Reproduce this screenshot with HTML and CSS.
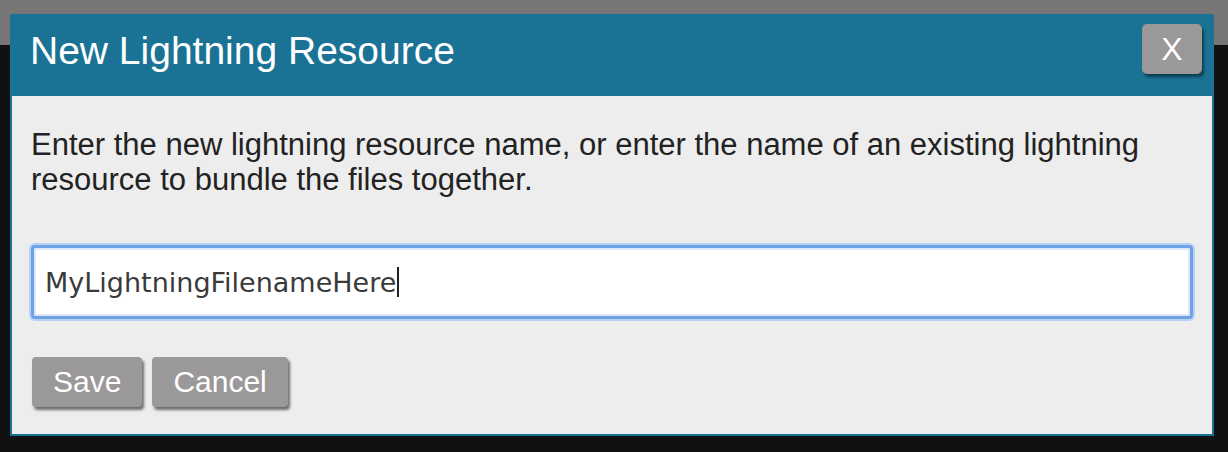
FILE: index.html
```html
<!DOCTYPE html>
<html lang="en">
<head>
<meta charset="utf-8">
<title>New Lightning Resource</title>
<link rel="stylesheet" href="styles.css">
</head>
<body>
<div class="page">
  <div class="dialog">
    <div class="header">
      <h1 class="title">New Lightning Resource</h1>
      <button class="close" type="button">X</button>
    </div>
    <div class="content">
      <p class="message">Enter the new lightning resource name, or enter the name of an existing lightning resource to bundle the files together.</p>
      <div class="field"><span class="value">MyLightningFilenameHere</span><span class="caret"></span></div>
      <div class="actions">
        <button class="btn" type="button">Save</button>
        <button class="btn" type="button">Cancel</button>
      </div>
    </div>
  </div>
</div>
</body>
</html>
```

FILE: styles.css
```css
html, body {
  margin: 0;
  padding: 0;
}
body {
  width: 1228px;
  height: 452px;
  overflow: hidden;
  background: linear-gradient(#787576 0, #787576 45px, #101112 45px, #101112 100%);
  font-family: "Liberation Sans", Arial, sans-serif;
}
.page {
  padding: 14px 0 0 10px;
}
.dialog {
  width: 1200px;
  border: 2px solid #1a7394;
  border-top-width: 0;
  background: #ededed;
}
.header {
  display: flex;
  justify-content: space-between;
  align-items: flex-start;
  height: 72px;
  padding: 10px 10px 0 18px;
  background: #1a7394;
}
.title {
  margin: 5px 0 0 0;
  font-size: 39px;
  font-weight: normal;
  line-height: 44px;
  color: #ffffff;
}
.close {
  width: 60px;
  height: 50px;
  padding: 0;
  border: none;
  border-radius: 5px;
  background: #9b9899;
  color: #ffffff;
  font-family: "Liberation Sans", Arial, sans-serif;
  font-size: 32px;
  line-height: 50px;
  box-shadow: 2px 3px 3px rgba(0, 20, 30, 0.55);
}
.content {
  padding: 31px 19px 27px 19px;
}
.message {
  margin: 0 0 48px 0;
  font-size: 31px;
  line-height: 35px;
  color: #222222;
}
.field {
  box-sizing: border-box;
  display: flex;
  align-items: center;
  height: 74px;
  padding: 0 0 0 11px;
  border: 3px solid #6ea2e4;
  border-radius: 4px;
  background: #ffffff;
  box-shadow: 0 0 0 2px rgba(160, 200, 245, 0.75), inset 0 0 0 2px #dce9fa;
  font-family: "DejaVu Sans", Verdana, sans-serif;
  font-size: 27px;
  color: #3a3a3a;
}
.caret {
  display: inline-block;
  width: 2px;
  height: 30px;
  margin-left: 1px;
  background: #222222;
}
.actions {
  display: flex;
  gap: 10px;
  margin-top: 38px;
  padding-left: 1px;
}
.btn {
  height: 50px;
  padding: 0 21px;
  border: none;
  border-radius: 4px;
  background: #9b9899;
  color: #ffffff;
  font-family: "Liberation Sans", Arial, sans-serif;
  font-size: 30px;
  line-height: 50px;
  box-shadow: 2px 3px 3px rgba(0, 0, 0, 0.55);
}
```
